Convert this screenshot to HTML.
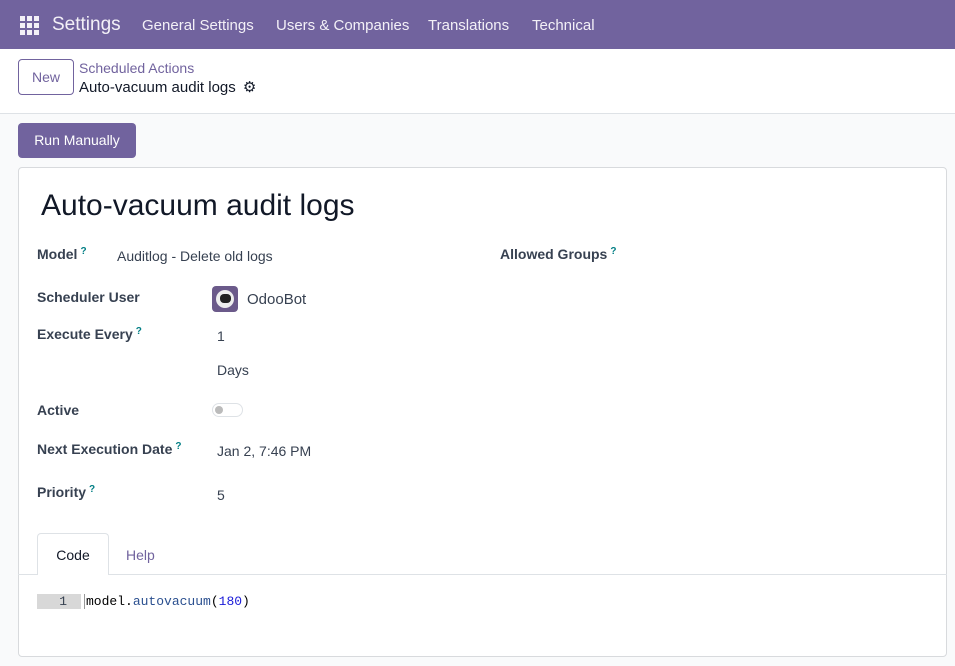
<!DOCTYPE html>
<html><head><meta charset="utf-8"><style>
*{box-sizing:border-box;margin:0;padding:0}
body{width:955px;height:666px;overflow:hidden;background:#f9fafb;font-family:"Liberation Sans",sans-serif;color:#374151;font-size:14px;position:relative}
.nav{position:absolute;left:0;top:0;width:955px;height:49px;background:#71639e;color:#fff}
.nav span{position:absolute;top:17px;font-size:15px;color:#f3f0f7}
.cp{position:absolute;left:0;top:49px;width:955px;height:65px;background:#fff;border-bottom:1px solid #dee2e6}
.abs{position:absolute;white-space:nowrap}
.lbl{font-weight:bold;color:#374151;font-size:14px}
.q{color:#017e84;font-size:10px;vertical-align:top;margin-left:3px;font-weight:bold}
</style></head><body>
<div class="nav">
<svg style="position:absolute;left:20px;top:16px" width="19" height="19" viewBox="0 0 19 19" fill="#f3f0f7"><rect x="0" y="0" width="5" height="5"/><rect x="7" y="0" width="5" height="5"/><rect x="14" y="0" width="5" height="5"/><rect x="0" y="7" width="5" height="5"/><rect x="7" y="7" width="5" height="5"/><rect x="14" y="7" width="5" height="5"/><rect x="0" y="14" width="5" height="5"/><rect x="7" y="14" width="5" height="5"/><rect x="14" y="14" width="5" height="5"/></svg>
<span style="left:52px;top:14px;font-size:19px">Settings</span>
<span style="left:142px">General Settings</span>
<span style="left:276px">Users &amp; Companies</span>
<span style="left:428px">Translations</span>
<span style="left:532px">Technical</span>
</div>
<div class="cp">
<div class="abs" style="left:18px;top:10px;width:56px;height:36px;border:1px solid #71639e;border-radius:4px;color:#71639e;font-size:14px;text-align:center;line-height:34px">New</div>
<div class="abs" style="left:79px;top:11px;color:#71639e;font-size:14px">Scheduled Actions</div>
<div class="abs" style="left:79px;top:29px;color:#111827;font-size:15px">Auto-vacuum audit logs <span style="font-size:15px;margin-left:3px">⚙</span></div>
</div>
<div class="abs" style="left:18px;top:123px;width:118px;height:35px;background:#71639e;border-radius:4px;color:#fff;text-align:center;line-height:35px;font-size:14px">Run Manually</div>
<div class="abs" style="left:18px;top:167px;width:929px;height:490px;background:#fff;border:1px solid #d8dadd;border-radius:4px"></div>
<div class="abs" style="left:41px;top:189px;font-size:30px;color:#111827">Auto-vacuum audit logs</div>
<div class="abs lbl" style="left:37px;top:246px">Model<span class="q">?</span></div>
<div class="abs" style="left:117px;top:248px">Auditlog - Delete old logs</div>
<div class="abs lbl" style="left:500px;top:246px">Allowed Groups<span class="q">?</span></div>
<div class="abs lbl" style="left:37px;top:289px">Scheduler User</div>
<div class="abs" style="left:212px;top:286px;width:26px;height:26px;border-radius:4px;background:#6b5a8a"><div style="position:absolute;left:4px;top:4px;width:18px;height:18px;border-radius:50%;background:#eee"></div><div style="position:absolute;left:8px;top:8px;width:11px;height:9px;border-radius:4px;background:#222"></div></div>
<div class="abs" style="left:247px;top:291px;font-size:15px">OdooBot</div>
<div class="abs lbl" style="left:37px;top:326px">Execute Every<span class="q">?</span></div>
<div class="abs" style="left:217px;top:328px">1</div>
<div class="abs" style="left:217px;top:362px">Days</div>
<div class="abs lbl" style="left:37px;top:402px">Active</div>
<div class="abs" style="left:212px;top:403px;width:31px;height:14px;border:1px solid #dee2e6;border-radius:7px"><div style="position:absolute;left:2px;top:2px;width:8px;height:8px;border-radius:50%;background:#bbb"></div></div>
<div class="abs lbl" style="left:37px;top:441px">Next Execution Date<span class="q">?</span></div>
<div class="abs" style="left:217px;top:443px">Jan 2, 7:46 PM</div>
<div class="abs lbl" style="left:37px;top:484px">Priority<span class="q">?</span></div>
<div class="abs" style="left:217px;top:487px">5</div>
<div class="abs" style="left:18px;top:574px;width:929px;height:1px;background:#dee2e6"></div>
<div class="abs" style="left:37px;top:533px;width:72px;height:42px;background:#fff;border:1px solid #dee2e6;border-bottom:none;border-radius:4px 4px 0 0;text-align:center;line-height:42px;color:#111827">Code</div>
<div class="abs" style="left:126px;top:547px;color:#71639e">Help</div>
<div class="abs" style="left:37px;top:594px;width:44px;height:15px;background:#d8d8d8;font-family:'Liberation Mono',monospace;font-size:13px;text-align:right;padding-right:14px;line-height:15px">1</div>
<div class="abs" style="left:84px;top:594px;font-family:'Liberation Mono',monospace;font-size:13px;line-height:15px;color:#000;border-left:1px solid #999;padding-left:1px">model.<span style="color:#2a4f8f">autovacuum</span>(<span style="color:#1a1ad8">180</span>)</div>
</body></html>
